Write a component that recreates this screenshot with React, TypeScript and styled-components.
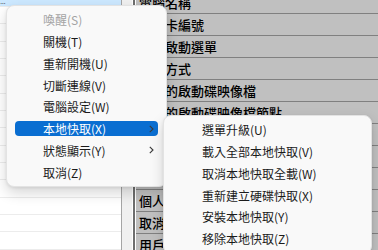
import styled, { createGlobalStyle } from "styled-components";

const GlobalStyle = createGlobalStyle`
  html, body {
    margin: 0;
    padding: 0;
    background: #ffffff;
    overflow: hidden;
  }
  * {
    box-sizing: border-box;
  }
`;

type MenuEntry = {
  label: string;
  disabled?: boolean;
  active?: boolean;
  sub?: boolean;
};

const mainItems: MenuEntry[] = [
  { label: "喚醒(S)", disabled: true },
  { label: "關機(T)" },
  { label: "重新開機(U)" },
  { label: "切斷連線(V)" },
  { label: "電腦設定(W)" },
  { label: "本地快取(X)", active: true, sub: true },
  { label: "狀態顯示(Y)", sub: true },
  { label: "取消(Z)" },
];

const subItems: MenuEntry[] = [
  { label: "選單升級(U)" },
  { label: "載入全部本地快取(V)" },
  { label: "取消本地快取全載(W)" },
  { label: "重新建立硬碟快取(X)" },
  { label: "安裝本地快取(Y)" },
  { label: "移除本地快取(Z)" },
];

const tableRows = [
  "電腦名稱",
  "網路卡編號",
  "開機啟動選單",
  "開機方式",
  "預設的啟動碟映像檔",
  "預設的啟動碟映像檔節點",
  "本地快取狀態",
  "硬碟還原模式",
  "電腦群組",
  "個人化設定",
  "取消本地快取",
  "用戶群組",
];

const Chevron = () => (
  <svg width="5" height="8" viewBox="0 0 5 8">
    <path d="M0.8 0.8 L4 4 L0.8 7.2" fill="none" stroke="#3a3a3a" strokeWidth="1.1" />
  </svg>
);

const App = () => {
  return (
    <Screen>
      <GlobalStyle />
      <ListPane>
        <ListBody>
          {Array.from({ length: 16 }).map((_, i) => (
            <ListRow key={i} $selected={i === 0}>
              {i === 0 && <Dots>...</Dots>}
            </ListRow>
          ))}
        </ListBody>
      </ListPane>
      <Splitter />
      <TablePane>
        <TableBody>
          {tableRows.map((t) => (
            <TableRow key={t}>{t}</TableRow>
          ))}
        </TableBody>
      </TablePane>

      <Menu $left={6} $top={5} $width={161}>
        {mainItems.map((it) => (
          <Item key={it.label}>
            <Pill $active={!!it.active} $indent={28}>
              <Label $disabled={!!it.disabled} $active={!!it.active}>
                {it.label}
              </Label>
              {it.sub && <Chevron />}
            </Pill>
          </Item>
        ))}
      </Menu>

      <Menu $left={163} $top={115} $width={209}>
        {subItems.map((it) => (
          <Item key={it.label}>
            <Pill $active={false} $indent={30}>
              <Label $disabled={false} $active={false}>
                {it.label}
              </Label>
            </Pill>
          </Item>
        ))}
      </Menu>
    </Screen>
  );
};

const Screen = styled.div`
  position: relative;
  width: 378px;
  height: 250px;
  overflow: hidden;
  display: flex;
  background: #ffffff;
`;

const ListPane = styled.div`
  width: 121px;
  height: 100%;
  overflow: hidden;
  background: #ffffff;
`;

const ListBody = styled.div`
  margin-top: -10.3px;
`;

const ListRow = styled.div<{ $selected: boolean }>`
  height: 17.33px;
  border-bottom: 1px solid #ececec;
  background: ${(p) => (p.$selected ? "#cce8ff" : "#ffffff")};
  position: relative;
`;

const Dots = styled.span`
  position: absolute;
  left: 0;
  bottom: 0;
  font: 8px/8px "Liberation Sans", sans-serif;
  color: #333;
  letter-spacing: -0.5px;
`;

const Splitter = styled.div`
  width: 14px;
  height: 100%;
  background: #f0f0f0;
  border-left: 1px solid #a5a5a5;
  border-right: 2px solid #6e6e6e;
  box-shadow: inset -1px 0 0 #ffffff;
`;

const TablePane = styled.div`
  flex: 1;
  height: 100%;
  overflow: hidden;
  background: #c0c0c0;
  border-left: 1px solid #ffffff;
`;

const TableBody = styled.div`
  margin-top: -8px;
`;

const TableRow = styled.div`
  height: 22px;
  border-bottom: 1px solid #808080;
  padding: 3px 0 0 3px;
  font: 500 13px/15px "Noto Sans CJK TC", "Liberation Sans", sans-serif;
  color: #000000;
  white-space: nowrap;
`;

const Menu = styled.div<{ $left: number; $top: number; $width: number }>`
  position: absolute;
  left: ${(p) => p.$left}px;
  top: ${(p) => p.$top}px;
  width: ${(p) => p.$width}px;
  padding: 3px 0;
  background: #f9f9f9;
  border: 1px solid #e3e3e3;
  border-radius: 8px;
  box-shadow: 0 6px 14px rgba(0, 0, 0, 0.16), 0 1px 3px rgba(0, 0, 0, 0.08);
`;

const Item = styled.div`
  height: 21.75px;
  padding: 0 8px;
  display: flex;
  align-items: center;
`;

const Pill = styled.div<{ $active: boolean; $indent: number }>`
  flex: 1;
  height: 15px;
  border-radius: 4px;
  padding: 0 4px 0 ${(p) => p.$indent}px;
  display: flex;
  align-items: center;
  justify-content: space-between;
  background: ${(p) => (p.$active ? "#0a6ed1" : "transparent")};
`;

const Label = styled.span<{ $disabled: boolean; $active: boolean }>`
  font: 12px/15px "Noto Sans CJK TC", "Noto Sans", sans-serif;
  white-space: nowrap;
  color: ${(p) => (p.$active ? "#ffffff" : p.$disabled ? "#a3a3a3" : "#1b1b1b")};
`;

export default App;
